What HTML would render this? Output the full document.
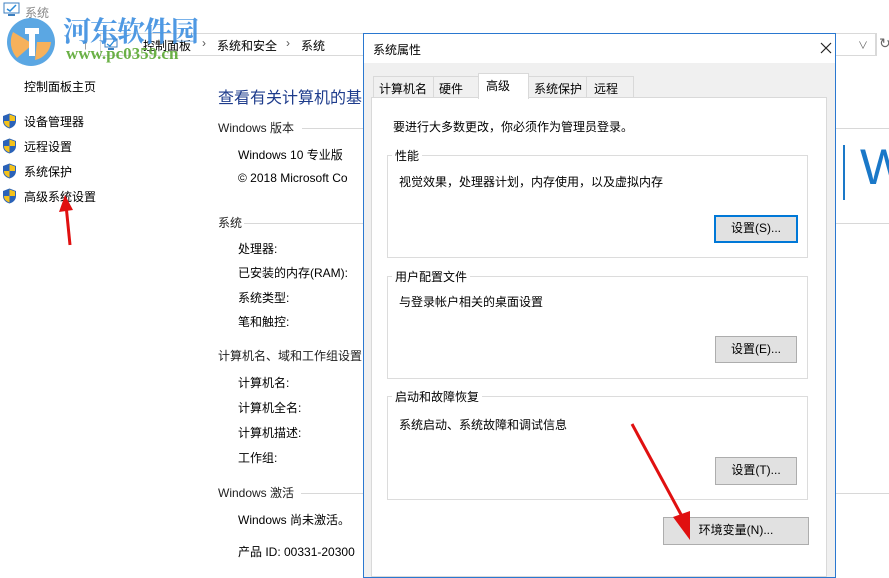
<!DOCTYPE html>
<html><head><meta charset="utf-8"><style>
*{margin:0;padding:0;box-sizing:border-box}
body{width:889px;height:569px;overflow:hidden;background:#fff;font-family:"Liberation Sans","Microsoft YaHei","Noto Sans CJK SC",sans-serif;font-size:12px;color:#000;position:relative}
.a{position:absolute;white-space:nowrap}
.hd{color:#1e1e1e}
.ln{position:absolute;height:1px;background:#d8d8d8}
.sh{position:absolute;width:15px;height:16px}
.btn{position:absolute;background:#e1e1e1;border:1px solid #adadad;text-align:center;line-height:25px;font-size:12px}
.grp{position:absolute;border:1px solid #dcdcdc}
.gl{position:absolute;background:#fff;padding:0 3px;font-size:12px}
</style></head><body>
<!-- address bar -->
<div class="a" style="left:82px;top:36px;color:#666;font-size:14px">↑</div>
<div class="a" style="left:100px;top:33px;width:264px;height:23px;border:1px solid #d9d9d9;border-right:none"></div>
<svg class="a" style="left:104px;top:38px" width="14" height="13"><rect x="1" y="1" width="12" height="8" fill="#fff" stroke="#3c7fc0"/><path d="M3 6l3 2 4-5" stroke="#2a8ad8" stroke-width="1.3" fill="none"/><rect x="4" y="10" width="6" height="2" fill="#3c7fc0"/></svg>
<div class="a" style="left:143px;top:37px">控制面板</div>
<div class="a" style="left:202px;top:36px;color:#555">›</div>
<div class="a" style="left:217px;top:37px">系统和安全</div>
<div class="a" style="left:286px;top:36px;color:#555">›</div>
<div class="a" style="left:301px;top:37px">系统</div>
<div class="a" style="left:835px;top:33px;width:42px;height:23px;border:1px solid #d9d9d9;border-left:none"></div>
<div class="a" style="left:858px;top:37px;color:#666;font-size:10px">∨</div>
<div class="a" style="left:875px;top:33px;width:1px;height:23px;background:#d9d9d9"></div>
<div class="a" style="left:879px;top:35px;color:#666;font-size:14px">↻</div>
<!-- window title -->
<svg class="a" style="left:3px;top:2px" width="18" height="16"><rect x="1" y="1" width="15" height="10" fill="#fff" stroke="#3c7fc0"/><path d="M4 7l3 2 6-6" stroke="#2a8ad8" stroke-width="1.5" fill="none"/><rect x="5" y="12" width="7" height="2" fill="#3c7fc0"/></svg>
<div class="a" style="left:25px;top:4px;color:#888;font-size:12px">系统</div>
<!-- watermark logo -->
<svg class="a" style="left:3px;top:14px;opacity:0.9" width="60" height="52"><circle cx="28" cy="28" r="24" fill="#4a9ee0"/><path d="M14 44 A24 24 0 0 1 10 18 L30 30Z" fill="#f6a94a"/><path d="M32 46 A20 20 0 0 0 48 28 L34 28Z" fill="#f6a94a"/><path d="M22 14h14v6h-4v22h-6V20h-4z" fill="#fff"/></svg>
<div class="a" style="left:63px;top:10px;font-size:28px;font-weight:bold;color:#3d8fe0;font-family:'Noto Serif CJK SC',serif;letter-spacing:-1px;opacity:0.9">河东软件园</div>
<div class="a" style="left:66px;top:44px;font-size:17px;font-weight:bold;color:#5aa832;font-family:'Liberation Serif',serif;opacity:0.9">www.pc0359.cn</div>
<!-- left nav -->
<div class="a" style="left:24px;top:78px">控制面板主页</div>
<svg class="sh" style="left:2px;top:113px" viewBox="0 0 15 16"><path d="M7.5 0.5L14 3v5c0 4-3 6.5-6.5 7.5C4 14.5 1 12 1 8V3z" fill="#2a62b8"/><path d="M7.5 1.5V8H13V3.5zM7.5 8V14.5C4.5 13.5 2 11.5 2 8z" fill="#f4c21b"/></svg>
<div class="a" style="left:24px;top:113px">设备管理器</div>
<svg class="sh" style="left:2px;top:138px" viewBox="0 0 15 16"><path d="M7.5 0.5L14 3v5c0 4-3 6.5-6.5 7.5C4 14.5 1 12 1 8V3z" fill="#2a62b8"/><path d="M7.5 1.5V8H13V3.5zM7.5 8V14.5C4.5 13.5 2 11.5 2 8z" fill="#f4c21b"/></svg>
<div class="a" style="left:24px;top:138px">远程设置</div>
<svg class="sh" style="left:2px;top:163px" viewBox="0 0 15 16"><path d="M7.5 0.5L14 3v5c0 4-3 6.5-6.5 7.5C4 14.5 1 12 1 8V3z" fill="#2a62b8"/><path d="M7.5 1.5V8H13V3.5zM7.5 8V14.5C4.5 13.5 2 11.5 2 8z" fill="#f4c21b"/></svg>
<div class="a" style="left:24px;top:163px">系统保护</div>
<svg class="sh" style="left:2px;top:188px" viewBox="0 0 15 16"><path d="M7.5 0.5L14 3v5c0 4-3 6.5-6.5 7.5C4 14.5 1 12 1 8V3z" fill="#2a62b8"/><path d="M7.5 1.5V8H13V3.5zM7.5 8V14.5C4.5 13.5 2 11.5 2 8z" fill="#f4c21b"/></svg>
<div class="a" style="left:24px;top:188px">高级系统设置</div>
<!-- main content -->
<div class="a" style="left:218px;top:84px;font-size:16px;color:#1e3c8c">查看有关计算机的基</div>
<div class="a hd" style="left:218px;top:119px">Windows 版本</div><div class="ln" style="left:302px;top:128px;width:62px"></div>
<div class="a" style="left:238px;top:146px">Windows 10 专业版</div>
<div class="a" style="left:238px;top:171px">© 2018 Microsoft Co</div>
<div class="a hd" style="left:218px;top:214px">系统</div><div class="ln" style="left:244px;top:223px;width:120px"></div>
<div class="a" style="left:238px;top:240px">处理器:</div>
<div class="a" style="left:238px;top:264px">已安装的内存(RAM):</div>
<div class="a" style="left:238px;top:289px">系统类型:</div>
<div class="a" style="left:238px;top:313px">笔和触控:</div>
<div class="a hd" style="left:218px;top:347px">计算机名、域和工作组设置</div>
<div class="a" style="left:238px;top:374px">计算机名:</div>
<div class="a" style="left:238px;top:399px">计算机全名:</div>
<div class="a" style="left:238px;top:424px">计算机描述:</div>
<div class="a" style="left:238px;top:449px">工作组:</div>
<div class="a hd" style="left:218px;top:484px">Windows 激活</div><div class="ln" style="left:301px;top:493px;width:63px"></div>
<div class="a" style="left:238px;top:511px">Windows 尚未激活。</div>
<div class="a" style="left:238px;top:543px">产品 ID: 00331-20300</div>
<!-- right bg -->
<div class="ln" style="left:835px;top:128px;width:54px"></div>
<div class="ln" style="left:835px;top:223px;width:54px"></div>
<div class="ln" style="left:835px;top:493px;width:54px"></div>
<div class="a" style="left:843px;top:145px;width:2px;height:55px;background:#1a78c8"></div>
<div class="a" style="left:860px;top:138px;font-size:50px;color:#1a78c8;font-family:'Liberation Sans',sans-serif">W</div>
<!-- dialog -->
<div class="a" style="left:363px;top:33px;width:473px;height:545px;background:#f0f0f0;border:1px solid #2a78d0"></div>
<div class="a" style="left:364px;top:34px;width:471px;height:29px;background:#fff"></div>
<div class="a" style="left:373px;top:41px">系统属性</div>
<svg class="a" style="left:820px;top:42px" width="12" height="12"><path d="M1 1L11 11M11 1L1 11" stroke="#222" stroke-width="1.2"/></svg>
<!-- tabs -->
<div class="a" style="left:373px;top:76px;width:61px;height:22px;border:1px solid #d9d9d9;background:#f0f0f0"></div>
<div class="a" style="left:379px;top:80px">计算机名</div>
<div class="a" style="left:433px;top:76px;width:46px;height:22px;border:1px solid #d9d9d9;background:#f0f0f0"></div>
<div class="a" style="left:439px;top:80px">硬件</div>
<div class="a" style="left:528px;top:76px;width:59px;height:22px;border:1px solid #d9d9d9;background:#f0f0f0"></div>
<div class="a" style="left:534px;top:80px">系统保护</div>
<div class="a" style="left:586px;top:76px;width:48px;height:22px;border:1px solid #d9d9d9;background:#f0f0f0"></div>
<div class="a" style="left:594px;top:80px">远程</div>
<div class="a" style="left:371px;top:97px;width:456px;height:480px;background:#fff;border:1px solid #d9d9d9"></div>
<div class="a" style="left:478px;top:73px;width:51px;height:26px;border:1px solid #d9d9d9;border-bottom:none;background:#fff"></div>
<div class="a" style="left:486px;top:77px">高级</div>
<div class="a" style="left:393px;top:118px">要进行大多数更改，你必须作为管理员登录。</div>
<div class="grp" style="left:387px;top:155px;width:421px;height:103px"></div>
<div class="gl" style="left:392px;top:147px">性能</div>
<div class="a" style="left:399px;top:173px">视觉效果，处理器计划，内存使用，以及虚拟内存</div>
<div class="btn" style="left:714px;top:215px;width:84px;height:28px;border:2px solid #0078d7;line-height:23px">设置(S)...</div>
<div class="grp" style="left:387px;top:276px;width:421px;height:103px"></div>
<div class="gl" style="left:392px;top:268px">用户配置文件</div>
<div class="a" style="left:399px;top:293px">与登录帐户相关的桌面设置</div>
<div class="btn" style="left:715px;top:336px;width:82px;height:27px">设置(E)...</div>
<div class="grp" style="left:387px;top:396px;width:421px;height:104px"></div>
<div class="gl" style="left:392px;top:388px">启动和故障恢复</div>
<div class="a" style="left:399px;top:416px">系统启动、系统故障和调试信息</div>
<div class="btn" style="left:715px;top:457px;width:82px;height:28px">设置(T)...</div>
<div class="btn" style="left:663px;top:517px;width:146px;height:28px">环境变量(N)...</div>
<!-- arrows -->
<svg class="a" style="left:0;top:0" width="889" height="569">
<path d="M70 245 L66 205" stroke="#e01010" stroke-width="3"/><path d="M59 212 L65 195 L73 210Z" fill="#e01010"/>
<path d="M632 424 L684 520" stroke="#e01010" stroke-width="3"/><path d="M673 517 L690 540 L690 511Z" fill="#e01010"/>
</svg>
</body></html>
